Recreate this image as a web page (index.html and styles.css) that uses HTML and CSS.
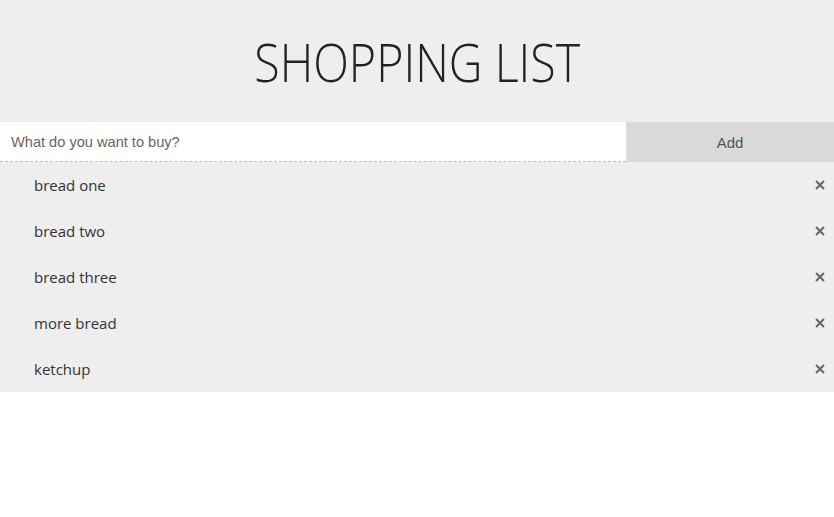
FILE: index.html
```html
<!DOCTYPE html>
<html>
<head>
<meta charset="utf-8">
<link rel="stylesheet" href="styles.css">
</head>
<body>
<header class="header">
  <h1 class="title">SHOPPING LIST</h1>
</header>
<form class="add-form">
  <input class="add-input" type="text" placeholder="What do you want to buy?">
  <button class="add-btn" type="button">Add</button>
</form>
<ul class="list">
  <li class="item"><span class="item-text">bread one</span><svg class="remove" viewBox="0 0 10 10"><path d="M1 1L9 9M9 1L1 9"/></svg></li>
  <li class="item"><span class="item-text">bread two</span><svg class="remove" viewBox="0 0 10 10"><path d="M1 1L9 9M9 1L1 9"/></svg></li>
  <li class="item"><span class="item-text">bread three</span><svg class="remove" viewBox="0 0 10 10"><path d="M1 1L9 9M9 1L1 9"/></svg></li>
  <li class="item"><span class="item-text">more bread</span><svg class="remove" viewBox="0 0 10 10"><path d="M1 1L9 9M9 1L1 9"/></svg></li>
  <li class="item"><span class="item-text">ketchup</span><svg class="remove" viewBox="0 0 10 10"><path d="M1 1L9 9M9 1L1 9"/></svg></li>
</ul>
</body>
</html>
```
FILE: styles.css
```css
html, body {
  margin: 0;
  padding: 0;
  background: #fff;
  font-family: "Open Sans", "Liberation Sans", sans-serif;
}
.header {
  background: #eeeeee;
  height: 122px;
  display: flex;
  align-items: center;
  justify-content: center;
}
.title {
  margin: 0;
  font-weight: 300;
  font-size: 53px;
  color: #222;
  line-height: 1;
  transform: scaleX(0.88);
}
.add-form {
  display: flex;
  height: 40px;
  margin: 0;
}
.add-input {
  flex: 0 0 626px;
  box-sizing: border-box;
  border: none;
  border-bottom: 1px dashed #bbb;
  padding: 0 11px;
  font-family: "Liberation Sans", sans-serif;
  font-size: 14.6px;
  color: #555;
  outline: none;
  background: #fff;
}
.add-input::placeholder {
  color: #666;
}
.add-btn {
  flex: 1;
  border: none;
  background: #d9d9d9;
  font-family: "Liberation Sans", sans-serif;
  font-size: 15px;
  color: #555;
  padding: 0;
}
.list {
  list-style: none;
  margin: 0;
  padding: 0;
  background: #eeeeee;
}
.item {
  height: 46px;
  display: flex;
  align-items: center;
  justify-content: space-between;
  padding: 0 9px 0 34px;
  font-size: 15px;
  color: #333;
}
.remove {
  width: 10px;
  height: 10px;
  fill: none;
  stroke: #666;
  stroke-width: 2;
}
```
